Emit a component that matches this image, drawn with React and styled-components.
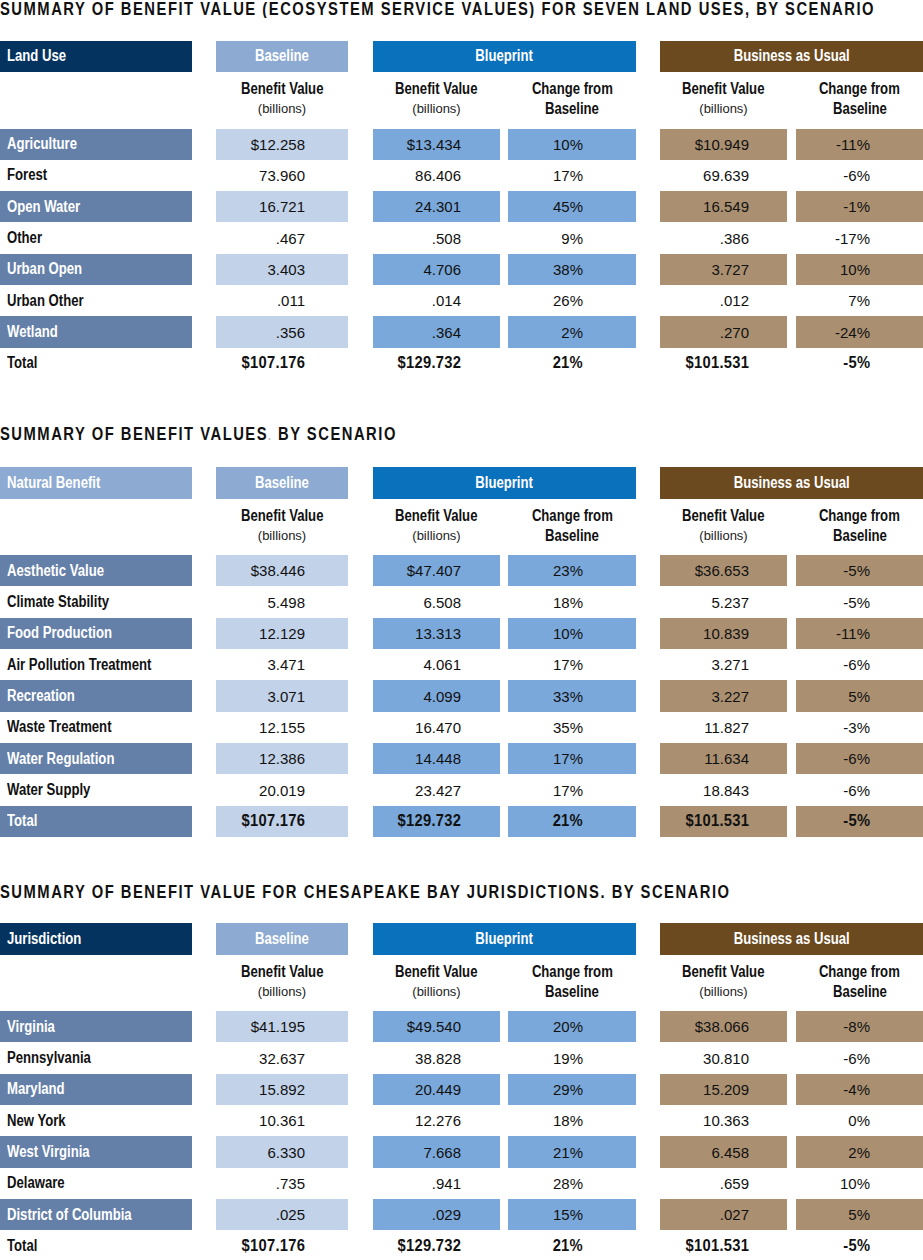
import React from "react";
import styled, { createGlobalStyle } from "styled-components";

const Global = createGlobalStyle`
  html, body { margin: 0; padding: 0; background: #ffffff; overflow: hidden; }
  body { font-family: "Liberation Sans", Arial, sans-serif; color: #111; }
`;

const SANS = `"Liberation Sans", Arial, sans-serif`;

/* Condensed bold type: Arial-metric bold drawn at Arial Narrow proportions */
const Narrow = styled.span`
  display: inline-block;
  white-space: nowrap;
  transform: scaleX(${(p) => p.$scale || 0.82});
  transform-origin: ${(p) => p.$origin || "left"} center;
`;

const Page = styled.div`
  width: 923px;
  display: flex;
  flex-direction: column;
  gap: 45.5px;
  overflow: hidden;
`;

const Section = styled.section`
  display: flex;
  flex-direction: column;
  gap: 22.5px;
`;

const Title = styled.h2`
  margin: 0;
  font-family: ${SANS};
  font-weight: 700;
  font-size: 18px;
  line-height: 18px;
  letter-spacing: 1.85px;
  color: #111;
  white-space: nowrap;
  overflow: hidden;
`;

const Dim = styled.span`
  color: #b0b0b0;
  font-size: 12px;
`;

const Grid = styled.div`
  display: grid;
  grid-template-columns:
    [l-s] 192px [l-e] 24px [b-s] 132px [b-e] 25px [pv-s] 127px [pv-e] 8px
    [pc-s] 128px [pc-e] 24px [uv-s] 127px [uv-e] 9px [uc-s] 127px [uc-e];
  grid-template-rows: 31.5px 56.5px;
  grid-auto-rows: 31.33px;
`;

const HeadCell = styled.div`
  grid-column: ${(p) => p.$span};
  grid-row: 1;
  background: ${(p) => p.$bg};
  color: #fff;
  font-family: ${SANS};
  font-weight: 700;
  font-size: 16px;
  display: flex;
  align-items: center;
  justify-content: ${(p) => (p.$left ? "flex-start" : "center")};
  padding-left: ${(p) => (p.$left ? "7px" : "0")};
  overflow: hidden;
`;

const SubHead = styled.div`
  grid-column: ${(p) => p.$span};
  grid-row: 2;
  display: flex;
  flex-direction: column;
  align-items: center;
  padding-top: 7px;
`;

const SubStrong = styled.span`
  display: inline-block;
  font-family: ${SANS};
  font-weight: 700;
  font-size: 16px;
  line-height: 20px;
  color: #111;
  white-space: nowrap;
  transform: scaleX(0.82);
  transform-origin: center center;
`;

const SubNote = styled.span`
  font-family: ${SANS};
  font-size: 13px;
  line-height: 20px;
  color: #222;
`;

const LabelCell = styled.div`
  grid-column: l-s / l-e;
  grid-row: ${(p) => p.$row};
  background: ${(p) => (p.$shaded ? "#6580a8" : "transparent")};
  color: ${(p) => (p.$shaded ? "#ffffff" : "#111")};
  font-family: ${SANS};
  font-weight: 700;
  font-size: 16px;
  display: flex;
  align-items: center;
  padding-left: 7px;
  white-space: nowrap;
  overflow: hidden;
`;

const ValueCell = styled.div`
  grid-column: ${(p) => p.$col};
  grid-row: ${(p) => p.$row};
  background: ${(p) => (p.$shaded ? p.$shade : "transparent")};
  display: flex;
  align-items: center;
  justify-content: flex-end;
  padding-right: ${(p) => p.$pad}px;
  font-family: ${SANS};
  font-weight: ${(p) => (p.$bold ? 700 : 400)};
  font-size: ${(p) => (p.$bold ? "16px" : "15px")};
  letter-spacing: ${(p) => (p.$bold ? "0.3px" : "0")};
  color: #111;
  white-space: nowrap;
`;

const NAVY = "#05335f";
const LIGHT = "#8daad2";
const BLUE = "#0a71bc";
const BROWN = "#6b4a1f";

const COLS = [
  { col: "b-s / b-e", pad: 43, shade: "#c2d2e8" },
  { col: "pv-s / pv-e", pad: 39, shade: "#7aa8da" },
  { col: "pc-s / pc-e", pad: 53, shade: "#7aa8da" },
  { col: "uv-s / uv-e", pad: 38, shade: "#aa9071" },
  { col: "uc-s / uc-e", pad: 53, shade: "#aa9071" },
];

const TABLES = [
  {
    title: "SUMMARY OF BENEFIT VALUE (ECOSYSTEM SERVICE VALUES) FOR SEVEN LAND USES, BY SCENARIO",
    head: "Land Use",
    headBg: NAVY,
    rows: [
      ["Agriculture", "$12.258", "$13.434", "10%", "$10.949", "-11%"],
      ["Forest", "73.960", "86.406", "17%", "69.639", "-6%"],
      ["Open Water", "16.721", "24.301", "45%", "16.549", "-1%"],
      ["Other", ".467", ".508", "9%", ".386", "-17%"],
      ["Urban Open", "3.403", "4.706", "38%", "3.727", "10%"],
      ["Urban Other", ".011", ".014", "26%", ".012", "7%"],
      ["Wetland", ".356", ".364", "2%", ".270", "-24%"],
      ["Total", "$107.176", "$129.732", "21%", "$101.531", "-5%"],
    ],
  },
  {
    title: (
      <>
        SUMMARY OF BENEFIT VALUES<Dim>.</Dim> BY SCENARIO
      </>
    ),
    head: "Natural Benefit",
    headBg: LIGHT,
    rows: [
      ["Aesthetic Value", "$38.446", "$47.407", "23%", "$36.653", "-5%"],
      ["Climate Stability", "5.498", "6.508", "18%", "5.237", "-5%"],
      ["Food Production", "12.129", "13.313", "10%", "10.839", "-11%"],
      ["Air Pollution Treatment", "3.471", "4.061", "17%", "3.271", "-6%"],
      ["Recreation", "3.071", "4.099", "33%", "3.227", "5%"],
      ["Waste Treatment", "12.155", "16.470", "35%", "11.827", "-3%"],
      ["Water Regulation", "12.386", "14.448", "17%", "11.634", "-6%"],
      ["Water Supply", "20.019", "23.427", "17%", "18.843", "-6%"],
      ["Total", "$107.176", "$129.732", "21%", "$101.531", "-5%"],
    ],
  },
  {
    title: "SUMMARY OF BENEFIT VALUE FOR CHESAPEAKE BAY JURISDICTIONS. BY SCENARIO",
    head: "Jurisdiction",
    headBg: NAVY,
    rows: [
      ["Virginia", "$41.195", "$49.540", "20%", "$38.066", "-8%"],
      ["Pennsylvania", "32.637", "38.828", "19%", "30.810", "-6%"],
      ["Maryland", "15.892", "20.449", "29%", "15.209", "-4%"],
      ["New York", "10.361", "12.276", "18%", "10.363", "0%"],
      ["West Virginia", "6.330", "7.668", "21%", "6.458", "2%"],
      ["Delaware", ".735", ".941", "28%", ".659", "10%"],
      ["District of Columbia", ".025", ".029", "15%", ".027", "5%"],
      ["Total", "$107.176", "$129.732", "21%", "$101.531", "-5%"],
    ],
  },
];

function BenefitHead({ span }) {
  return (
    <SubHead $span={span}>
      <SubStrong>Benefit Value</SubStrong>
      <SubNote>(billions)</SubNote>
    </SubHead>
  );
}

function ChangeHead({ span }) {
  return (
    <SubHead $span={span}>
      <SubStrong>Change from</SubStrong>
      <SubStrong>Baseline</SubStrong>
    </SubHead>
  );
}

function SummaryTable({ table }) {
  return (
    <Section>
      <Title>
        <Narrow>{table.title}</Narrow>
      </Title>
      <Grid>
        <HeadCell $span="l-s / l-e" $bg={table.headBg} $left>
          <Narrow>{table.head}</Narrow>
        </HeadCell>
        <HeadCell $span="b-s / b-e" $bg={LIGHT}>
          <Narrow $origin="center">Baseline</Narrow>
        </HeadCell>
        <HeadCell $span="pv-s / pc-e" $bg={BLUE}>
          <Narrow $origin="center">Blueprint</Narrow>
        </HeadCell>
        <HeadCell $span="uv-s / uc-e" $bg={BROWN}>
          <Narrow $origin="center">Business as Usual</Narrow>
        </HeadCell>

        <BenefitHead span="b-s / b-e" />
        <BenefitHead span="pv-s / pv-e" />
        <ChangeHead span="pc-s / pc-e" />
        <BenefitHead span="uv-s / uv-e" />
        <ChangeHead span="uc-s / uc-e" />

        {table.rows.map((row, i) => {
          const shaded = i % 2 === 0;
          const bold = row[0] === "Total";
          const gridRow = i + 3;
          return (
            <React.Fragment key={row[0]}>
              <LabelCell $shaded={shaded} $row={gridRow}>
                <Narrow>{row[0]}</Narrow>
              </LabelCell>
              {COLS.map((c, j) => (
                <ValueCell
                  key={c.col}
                  $col={c.col}
                  $row={gridRow}
                  $pad={c.pad}
                  $shade={c.shade}
                  $shaded={shaded}
                  $bold={bold}
                >
                  {bold ? (
                    <Narrow $origin="right" $scale={0.92}>
                      {row[j + 1]}
                    </Narrow>
                  ) : (
                    row[j + 1]
                  )}
                </ValueCell>
              ))}
            </React.Fragment>
          );
        })}
      </Grid>
    </Section>
  );
}

export default function App() {
  return (
    <>
      <Global />
      <Page>
        {TABLES.map((t, i) => (
          <SummaryTable key={i} table={t} />
        ))}
      </Page>
    </>
  );
}
